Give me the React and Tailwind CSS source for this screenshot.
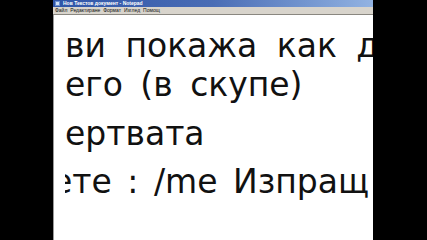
export default function App() {
  return (
    <div className="w-[427px] h-[240px] bg-black flex overflow-hidden">
      <div className="w-[53px] shrink-0 bg-black" />
      <div className="w-[320px] shrink-0 flex flex-col bg-white overflow-hidden">
        <div className="h-[7px] flex items-center bg-gradient-to-r from-[#2f55a8] via-[#4a6db5] to-[#93b3e2] pl-[2px]">
          <div className="w-[5px] h-[5px] bg-[#cfe0f5] border border-[#6b8fd0] mr-[3px]" />
          <span className="text-[5px] leading-none font-bold text-white whitespace-nowrap" style={{ fontFamily: '"Liberation Sans", sans-serif' }}>
            Нов Текстов документ - Notepad
          </span>
        </div>
        <div className="h-[8px] flex items-center gap-[3px] bg-[#d8d4cc] pl-[2px] border-b border-[#8a8780] text-[#111] text-[5px] leading-none whitespace-nowrap" style={{ fontFamily: '"Liberation Sans", sans-serif' }}>
          <span>Файл</span>
          <span>Редактиране</span>
          <span>Формат</span>
          <span>Изглед</span>
          <span>Помощ</span>
        </div>
        <div className="flex-1 flex border-l border-[#9a9a9a]">
          <div className="w-[11px] shrink-0" />
          <div className="flex-1 overflow-hidden pt-[14px] text-[33px] leading-[33px] text-[#111] whitespace-nowrap" style={{ fontFamily: '"DejaVu Sans", sans-serif' }}>
            <div className="[word-spacing:9px]">ви покажа как да</div>
            <div className="mt-[6px] [word-spacing:7px]">его (в скупе)</div>
            <div className="mt-[16px]">ертвата</div>
            <div className="mt-[15px] -ml-[13px] [word-spacing:5px]">ете : /me Изпращ</div>
          </div>
        </div>
      </div>
      <div className="flex-1 bg-black" />
    </div>
  );
}
